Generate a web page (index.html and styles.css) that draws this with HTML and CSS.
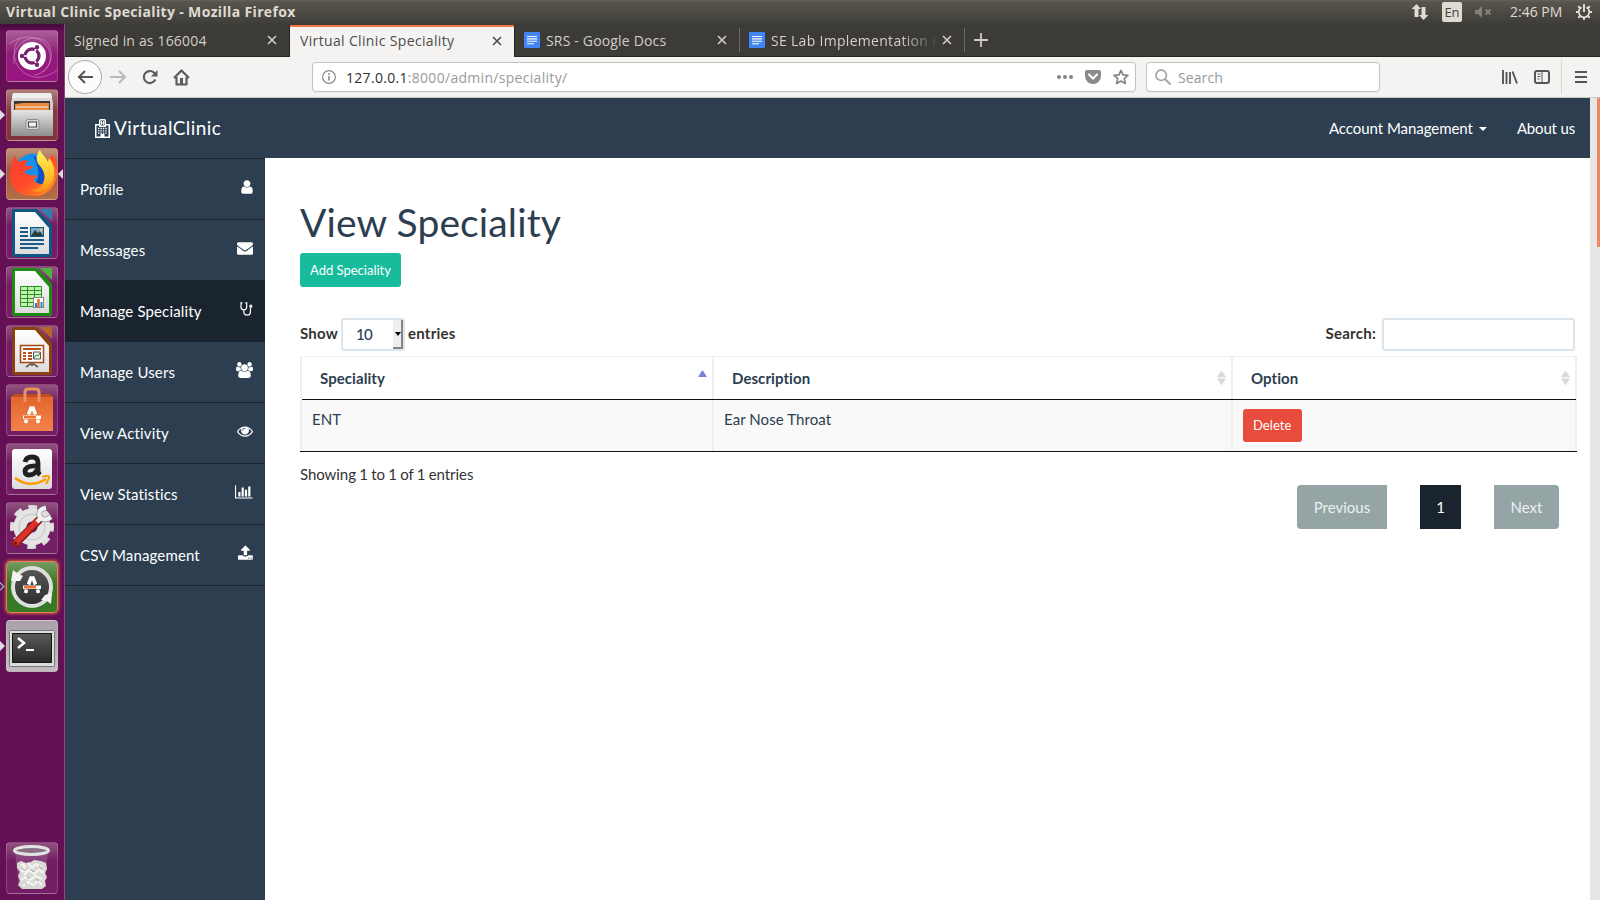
FILE: index.html
```html
<!DOCTYPE html>
<html lang="en">
<head>
<meta charset="utf-8">
<title>Virtual Clinic Speciality</title>
<link rel="stylesheet" href="styles.css">
</head>
<body>
<svg width="0" height="0" class="defs">
  <defs>
    <linearGradient id="silver" x1="0" y1="0" x2="0" y2="1"><stop offset="0" stop-color="#e6e6e6"/><stop offset="1" stop-color="#8f8f8f"/></linearGradient>
    <linearGradient id="paper" x1="0" y1="0" x2="0" y2="1"><stop offset="0" stop-color="#ffffff"/><stop offset="1" stop-color="#dcdcdc"/></linearGradient>
    <linearGradient id="fox" x1="0" y1="0" x2="1" y2="1"><stop offset="0" stop-color="#ff3b30"/><stop offset=".5" stop-color="#ff4a2a"/><stop offset="1" stop-color="#ff9a1e"/></linearGradient>
    <linearGradient id="flame" x1="0" y1="0" x2="0" y2="1"><stop offset="0" stop-color="#fff45a"/><stop offset=".6" stop-color="#ffc229"/><stop offset="1" stop-color="#ff8a1c"/></linearGradient>
    <linearGradient id="bag" x1="0" y1="0" x2="0" y2="1"><stop offset="0" stop-color="#e0632b"/><stop offset="1" stop-color="#f4824a"/></linearGradient>
    <linearGradient id="dark" x1="0" y1="0" x2="0" y2="1"><stop offset="0" stop-color="#5a5a58"/><stop offset="1" stop-color="#2a2a28"/></linearGradient>
    <path id="close" d="M1 1l8 8M9 1l-8 8" fill="none" stroke="currentColor" stroke-width="1.6"/>
    <g id="docs"><rect width="16" height="16" rx="1" fill="#4285f4"/><path d="M3 4.500h10M3 6.900h10M3 9.300h10M3 11.700h7" stroke="#fff" stroke-width="1.100"/></g>
    <g id="store-mark"><path d="M22.500 24.500L25 18h2l2.500 6.500M20.500 29.500L19.500 33M31.500 29.500L32.500 33" fill="none" stroke="#fff" stroke-width="3.600"/><path d="M17 25.500h18v3.500H17z" fill="#fff"/><path d="M18 26h12v2.500H18z" fill="#f07030"/></g>
  </defs>
</svg>

<header class="panel">
  <span class="panel-title">Virtual Clinic Speciality - Mozilla Firefox</span>
  <div class="indicators">
    <svg class="net" width="18" height="18" viewBox="0 0 18 18"><path d="M5.500 1L10 6H7.500v8h-4V6H0.500zM12.500 17L8 12h2.500V4h4v8h3z" fill="#dfdbd2"/></svg>
    <span class="lang">En</span>
    <svg class="vol" width="18" height="12" viewBox="0 0 18 12" fill="#85827a"><path d="M0 4h3l4-4v12L3 8H0z"/><path d="M10.500 3.500l5 5m0-5l-5 5" stroke="#85827a" stroke-width="1.800"/></svg>
    <span class="clock">2:46 PM</span>
    <svg class="power" width="16" height="16" viewBox="0 0 16 16" fill="none" stroke="#dfdbd2"><path d="M5.600 3.300a5.300 5.300 0 1 0 4.800 0" stroke-width="1.800"/><path d="M8 0v8M0 8h3M13 8h3M2.300 2.300l2 2M13.700 2.300l-2 2M2.300 13.700l2-2M13.700 13.700l-2-2M8 13v3" stroke-width="2"/></svg>
  </div>
</header>

<div class="desktop">
  <nav class="launcher">
    <div class="tile ubuntu"><svg viewBox="0 0 52 52"><g fill="none" stroke="#e3b5d8" stroke-opacity=".45"><path d="M8 34C5 16 22 3 38 10c11 8 9 25-2 32M3 14c15-12 38-8 41 10 2 12-6 20-16 21M14 8C4 18 6 42 28 47c9 1 17-2 23-7"/></g><circle cx="26" cy="26" r="14" fill="#fff"/><circle cx="26" cy="26" r="7" fill="none" stroke="#77216f" stroke-width="3.300"/><path d="M26 26L15 26M26 26l5.500-9.500M26 26l5.500 9.500" stroke="#fff" stroke-width="1.500"/><circle cx="26" cy="26" r="5.200" fill="#fff"/><g fill="#77216f"><circle cx="16" cy="26" r="2.200"/><circle cx="31" cy="17.300" r="2.200"/><circle cx="31" cy="34.700" r="2.200"/></g></svg></div>
    <div class="tile files"><i class="pip"></i><svg viewBox="0 0 52 52"><path d="M7 4h38l2 10v33H5V14z" fill="url(#silver)"/><path d="M7 4h38l1 5H6z" fill="#eee"/><path d="M8 12h36v10H8z" fill="#3e3530"/><path d="M9 15l8-1h26v8H9z" fill="#e98a42"/><path d="M10 18h32" stroke="#fff2df"/><path d="M6 21h41v26H6z" fill="url(#silver)"/><rect x="20" y="30.500" width="13" height="10" rx="2" fill="#d6d6d6" stroke="#8c8c8c"/><rect x="22.500" y="33" width="8" height="5" fill="#f2f2f2" stroke="#444"/></svg></div>
    <div class="tile firefox"><i class="pip"></i><i class="pip-right"></i><svg viewBox="0 0 52 52"><circle cx="27" cy="24" r="18.500" fill="#1791e8"/><path d="M27 8c9 2 15 9 13 21-2 9-9 12-16 10 9-4 12-15 3-31z" fill="#0b4fc4"/><path d="M9 8c1 3 2 5 4 6 3-2 6-2 9-1-2 2-3 3-2 5h7c0 2-4 4-8 5 0 3 3 4 6 4 3 1 5-1 6 2-5 2-3 6 4 7 7 0 9-4 10-10 2-5-1-10-4-14l6-5c5 7 5 17 3 25-4 12-14 17-25 16C12 47 4 40 4 28 4 20 6 13 9 8z" fill="url(#fox)"/><path d="M34 2c-5 6-4 12 0 16 5 6 6 12 2 19-3 4-8 6-12 4 6 5 15 4 20-3 7-9 5-22-1-28l-1 4c-2-5-6-7-8-12z" fill="url(#flame)"/></svg></div>
    <div class="tile"><svg viewBox="0 0 52 52"><path d="M34 2h12v12z" fill="#2f7fae"/><path d="M8 2h23l15 16v29q0 3-3 3H9q-3 0-3-3V4q0-2 2-2z" fill="#0e5684"/><path d="M9 5h20l14 16v26H9z" fill="url(#paper)"/><path d="M14 21h8M14 25h8M14 29h8M14 33h24M14 37h24M14 41h18" stroke="#1b5c88" stroke-width="2"/><rect x="24.500" y="20.500" width="13" height="9" fill="#7ba8cf" stroke="#0e5684"/><path d="M25 29l4-6 3 3 2-2 3 5z" fill="#2a3e37"/><circle cx="35" cy="23" r="1.500" fill="#f2c94c"/></svg></div>
    <div class="tile"><svg viewBox="0 0 52 52"><path d="M34 2h12v12z" fill="#4fb43d"/><path d="M8 2h23l15 16v29q0 3-3 3H9q-3 0-3-3V4q0-2 2-2z" fill="#1f8a16"/><path d="M9 5h20l14 16v26H9z" fill="url(#paper)"/><path d="M14.500 20.500h21v20h-21zM14.500 24.500h21M14.500 28.500h21M14.500 32.500h21M14.500 36.500h21M21.500 20.500v20M28.500 20.500v20" fill="#c7f0b7" stroke="#23961a"/><rect x="27.500" y="31.500" width="10" height="10" fill="#fff" stroke="#888"/><path d="M30 41v-4M35.500 41v-5" stroke="#2a7fd0" stroke-width="2"/><path d="M32.500 41v-8" stroke="#e26a1c" stroke-width="2.500"/></svg></div>
    <div class="tile"><svg viewBox="0 0 52 52"><path d="M34 2h12v12z" fill="#b5672a"/><path d="M8 2h23l15 16v29q0 3-3 3H9q-3 0-3-3V4q0-2 2-2z" fill="#8a4210"/><path d="M9 5h20l14 16v26H9z" fill="url(#paper)"/><path d="M26 38v3M26 38l-6 4M26 38l6 4" stroke="#666" stroke-width="2"/><rect x="14.500" y="20.500" width="23" height="17" fill="#fff" stroke="#a34a16" stroke-width="1.500"/><path d="M17 24h18M17 28h3M17 31h3M17 34h3M22 28h4M22 31h4M22 34h4" stroke="#b4541c" stroke-width="2"/><path d="M27.500 27h7v7h-7z" fill="#eee" stroke="#555"/><path d="M28 33l2-3 2 1 2-3" stroke="#2b962b" fill="none"/></svg></div>
    <div class="tile"><svg viewBox="0 0 52 52"><path d="M5 13l4-3h34l4 3v34H5z" fill="url(#bag)"/><path d="M5 13l4-3h34l4 3H5z" fill="#c14d1c"/><path d="M19 18V8q0-3 3-3h8q3 0 3 3v10" fill="none" stroke="#e99067" stroke-width="3"/><g transform="translate(0 6)"><use href="#store-mark"/></g></svg></div>
    <div class="tile"><svg viewBox="0 0 52 52"><rect x="6" y="6" width="40" height="40" rx="3" fill="url(#paper)"/><path d="M19 19q1-5 7-5 6 0 6 6v8q0 2 2 4M32 23q-12-1-13 5 0 4 4 4 7 0 9-8" fill="none" stroke="#222" stroke-width="4.800"/><path d="M9 35q15 11 31 1" fill="none" stroke="#ff9900" stroke-width="2.500"/><path d="M36 34q7-2 7 0t-3 7" fill="none" stroke="#ff9900" stroke-width="2"/></svg></div>
    <div class="tile"><svg viewBox="0 0 52 52"><circle cx="26" cy="25" r="18.500" fill="none" stroke="#dedede" stroke-width="7" stroke-dasharray="8 6.530" transform="rotate(-12 26 25)"/><circle cx="26" cy="25" r="12" fill="none" stroke="#e4e4e4" stroke-width="13"/><circle cx="26" cy="25" r="13" fill="none" stroke="#c4c4c4"/><path d="M10 41l22-22" stroke="#8c1414" stroke-width="8" stroke-linecap="round"/><path d="M10 40.500l22-22" stroke="#d9322c" stroke-width="5.500" stroke-linecap="round"/><path d="M40 6q-8 1-6.500 8 4 6.500 11.500 1" stroke="#8e8e8e" stroke-width="5.500" fill="none"/><path d="M31 20l5-5M40 6q-8 1-6.500 8 4 6.500 11.500 1" stroke="#f2f2f2" stroke-width="4.200" fill="none"/><circle cx="9.500" cy="41" r="1.500" fill="#6e1010"/></svg></div>
    <div class="tile updater"><i class="pip hollow"></i><svg viewBox="0 0 52 52"><circle cx="26" cy="26" r="20" fill="url(#dark)"/><circle cx="26" cy="26" r="19" fill="none" stroke="#dedede" stroke-width="4"/><path d="M5 20l2-11 4 3 6 3-3 5zM46 32l-1 11-4-3-6-1 4-5z" fill="#f3f3f3"/><g transform="translate(0 -1)"><use href="#store-mark"/></g></svg></div>
    <div class="tile terminal"><i class="pip"></i><svg viewBox="0 0 52 52"><rect x="3.500" y="10.500" width="45" height="36" rx="1" fill="#dedede" stroke="#777"/><rect x="6.500" y="13.500" width="39" height="29" fill="url(#dark)" stroke="#161616"/><path d="M12 18l6 5-6 5" fill="none" stroke="#fff" stroke-width="2.500"/><path d="M20 30h8" stroke="#fff" stroke-width="2"/></svg></div>
    <div class="tile trash"><svg viewBox="0 0 52 52"><path d="M9 10h33l-4 35q-12 4-25 0z" fill="#b98fb4" fill-opacity=".3"/><path d="M11 21l4-2 5 2 5-1 3-2 7 1 5 2 1 6-2 4 2 4-2 4 1 5-4 3H16l-4-4 2-4-2-5 2-4-3-4z" fill="#d9d9d5"/><path d="M15 22l4 2-3 5 5 1M22 21l4 5 4-4 5 3M18 33l5-5 5 4 5-4 5 3M15 38l5-3 4 3 6-4 6 3M17 44l5-4 5 3 5-4 4 4" fill="none" stroke="#f4f4f2" stroke-width="2"/><path d="M16 26l3 3M25 28l3 2M33 24l3 3M21 34l2 3M30 37l3 2M19 41l2 2" stroke="#9f9f9b"/><ellipse cx="25.500" cy="8.500" rx="17" ry="4" fill="#877083" stroke="#e3e3e1" stroke-width="3"/></svg></div>
  </nav>

  <main class="window">
    <div class="tabs">
      <div class="tab first"><span class="tab-label t1">Signed in as 166004</span><svg class="x" viewBox="0 0 10 10"><use href="#close"/></svg></div>
      <div class="tab active"><span class="tab-label t2">Virtual Clinic Speciality</span><svg class="x" viewBox="0 0 10 10"><use href="#close"/></svg></div>
      <div class="tab divided wide"><svg class="fav" viewBox="0 0 16 16"><use href="#docs"/></svg><span class="tab-label t3">SRS - Google Docs</span><svg class="x" viewBox="0 0 10 10"><use href="#close"/></svg></div>
      <div class="tab divided last"><svg class="fav" viewBox="0 0 16 16"><use href="#docs"/></svg><span class="tab-label fade">SE Lab Implementation P</span><svg class="x" viewBox="0 0 10 10"><use href="#close"/></svg></div>
      <svg class="plus" width="14" height="14" viewBox="0 0 14 14"><path d="M7 0v14M0 7h14" stroke="#cfccc5" stroke-width="1.800"/></svg>
    </div>

    <div class="toolbar">
      <div class="nav-buttons">
        <span class="back"><svg width="16" height="14" viewBox="0 0 16 14" fill="none" stroke="#545453" stroke-width="2"><path d="M1 7h15M8 1L2 7l6 6"/></svg></span>
        <svg width="17" height="14" viewBox="0 0 17 14" fill="none" stroke="#b9b8b6" stroke-width="2"><path d="M0 7h15M9 1l6 6-6 6"/></svg>
        <svg width="16" height="16" viewBox="0 0 16 16"><path d="M13.300 10.500A6 6 0 1 1 12 3.700l2 2" fill="none" stroke="#5c5c5b" stroke-width="2.200"/><path d="M15.500 1v6.500H9z" fill="#5c5c5b"/></svg>
        <svg width="17" height="17" viewBox="0 0 17 17"><path d="M1 9l7.500-7.500L16 9M3.500 8v7.500h10V8" fill="none" stroke="#5c5c5b" stroke-width="2.200" stroke-linejoin="round"/><path d="M7 9h3v6H7z" fill="#5c5c5b"/></svg>
      </div>
      <div class="url">
        <svg width="14" height="14" viewBox="0 0 14 14"><circle cx="7" cy="7" r="6.400" fill="none" stroke="#8a8a8a" stroke-width="1.200"/><path d="M7 6v4.500M7 3.200v1.800" stroke="#8a8a8a" stroke-width="1.600"/></svg>
        <span class="address"><b>127.0.0.1</b>:8000/admin/speciality/</span>
        <span class="url-actions">
          <svg width="16" height="4" viewBox="0 0 16 4" fill="#858585"><circle cx="2" cy="2" r="2"/><circle cx="8" cy="2" r="2"/><circle cx="14" cy="2" r="2"/></svg>
          <svg width="16" height="14" viewBox="0 0 16 14"><path d="M2 0h12q2 0 2 2v4a8 8 0 0 1-16 0V2q0-2 2-2z" fill="#8a8a8a"/><path d="M4 4.500l4 4 4-4" fill="none" stroke="#fff" stroke-width="2" stroke-linecap="round"/></svg>
          <svg width="16" height="16" viewBox="0 0 16 16"><path d="M8 1.300l2 4.500 4.900.5-3.600 3.300 1 4.900L8 12l-4.300 2.500 1-4.900L1.100 6.300 6 5.800z" fill="none" stroke="#858585" stroke-width="1.700" stroke-linejoin="round"/></svg>
        </span>
      </div>
      <div class="search"><svg width="16" height="16" viewBox="0 0 16 16" fill="none" stroke="#a9a9a9"><circle cx="6.200" cy="6.200" r="5.200" stroke-width="1.800"/><path d="M10 10l5.500 5.500" stroke-width="2.200"/></svg><span>Search</span></div>
      <div class="tools">
        <svg width="16" height="14" viewBox="0 0 16 14" fill="none" stroke="#545453" stroke-width="1.900"><path d="M1 0v14M4.500 2v12M8 2v12M10.500 1.500L15 13.500"/></svg>
        <svg width="16" height="14" viewBox="0 0 16 14"><rect x="1" y="1" width="14" height="12" rx="2" fill="none" stroke="#545453" stroke-width="2"/><path d="M8 1v12M3.500 4h3M3.500 6.500h3M3.500 9h2" stroke="#545453"/></svg>
        <i class="sep"></i>
        <svg width="12" height="12" viewBox="0 0 12 12"><path d="M0 1h12M0 6h12M0 11h12" stroke="#545453" stroke-width="2"/></svg>
      </div>
    </div>

    <div class="viewport">
      <div class="page">
        <div class="navbar">
          <div class="brand"><svg width="15" height="19" viewBox="0 0 15 19"><path d="M0 5h4V1.500Q4 0 5.500 0h4Q11 0 11 1.500V5h4v14H0z" fill="#fff"/><path d="M5.500 1.500h4v5h-4z" fill="#2c3e50"/><path d="M6.500 2v4M8.500 2v4M6.500 4h2" stroke="#fff" stroke-width=".9"/><path d="M1.500 6.500H4V8h7V6.500h2.500v11h-4V15h-4v2.500h-4z" fill="#2c3e50"/><path d="M3 9.500h9.500M3 11.800h9.500M3 14.100h9.500" stroke="#fff" stroke-width="1.300" stroke-dasharray="1.400 1"/></svg><span>VirtualClinic</span></div>
          <div class="nav-links"><span class="account">Account Management<i class="caret"></i></span><span class="about">About us</span></div>
        </div>
        <div class="body">
          <aside class="sidebar">
            <div class="item"><span>Profile</span><svg style="width:12px" viewBox="256 0 1280 1792"><path d="M1536 1399q0 109-62.500 187t-150.500 78h-854q-88 0-150.500-78t-62.500-187q0-85 8.500-160.500t31.500-152 58.500-131 94-89 134.500-34.500q131 128 313 128t313-128q76 0 134.500 34.500t94 89 58.500 131 31.500 152 8.500 160.500zm-256-887q0 159-112.500 271.500t-271.500 112.500-271.500-112.500-112.500-271.500 112.500-271.500 271.500-112.500 271.500 112.500 112.500 271.500z"/></svg></div>
            <div class="item"><span>Messages</span><svg style="width:16px" viewBox="0 0 1792 1792"><path d="M1792 710v794q0 66-47 113t-113 47h-1472q-66 0-113-47t-47-113v-794q44 49 101 87 362 246 497 345 57 42 92.500 65.500t94.500 48 110 24.500h2q51 0 110-24.500t94.500-48 92.500-65.500q170-123 498-345 57-39 100-87zm0-294q0 79-49 151t-122 123q-376 261-468 325-10 7-42.500 31t-54 38.500-52 32.500-57.500 27-50 9h-2q-23 0-50-9t-57.500-27-52-32.500-54-38.500-42.500-31q-91-64-262-182.500t-205-142.500q-62-42-117-115.500t-55-136.500q0-78 41.500-130t118.500-52h1472q65 0 112.500 47t47.500 113z"/></svg></div>
            <div class="item current"><span>Manage Speciality</span><svg style="width:12.600px" viewBox="0 0 1408 1792"><g fill="none" stroke="#fff" stroke-width="135"><path d="M270 210H110v420c0 200 130 350 320 350s320-150 320-350V210H590M430 980v220c0 230 170 380 370 380s370-150 370-380V700"/><circle cx="1216" cy="580" r="110"/></g></svg></div>
            <div class="item"><span>Manage Users</span><svg style="width:17px" viewBox="0 0 1920 1792"><path d="M593 896q-162 5-265 128h-134q-82 0-138-40.500t-56-118.500q0-353 124-353 6 0 43.500 21t97.500 42.500 119 21.500q67 0 133-23-5 37-5 66 0 139 81 256zm1071 637q0 120-73 189.500t-194 69.500h-874q-121 0-194-69.500t-73-189.500q0-53 3.500-103.500t14-109 26.500-108.500 43-97.500 62-81 85.500-53.500 111.500-20q10 0 43 21.500t73 48 107 48 135 21.500 135-21.500 107-48 73-48 43-21.500q61 0 111.500 20t85.500 53.500 62 81 43 97.500 26.500 108.500 14 109 3.500 103.500zm-1024-1277q0 106-75 181t-181 75-181-75-75-181 75-181 181-75 181 75 75 181zm704 384q0 159-112.500 271.500t-271.500 112.500-271.500-112.500-112.500-271.500 112.500-271.500 271.500-112.500 271.500 112.500 112.500 271.500zm576 225q0 78-56 118.500t-138 40.500h-134q-103-123-265-128 81-117 81-256 0-29-5-66 66 23 133 23 59 0 119-21.500t97.500-42.500 43.500-21q124 0 124 353zm-128-609q0 106-75 181t-181 75-181-75-75-181 75-181 181-75 181 75 75 181z"/></svg></div>
            <div class="item"><span>View Activity</span><svg style="width:16px" viewBox="0 0 1792 1792"><path d="M1664 960q-152-236-381-353 61 104 61 225 0 185-131.500 316.500t-316.500 131.500-316.500-131.500-131.500-316.500q0-121 61-225-229 117-381 353 133 205 333.500 326.500t434.500 121.500 434.500-121.500 333.500-326.500zm-720-384q0-20-14-34t-34-14q-125 0-214.500 89.500t-89.500 214.500q0 20 14 34t34 14 34-14 14-34q0-86 61-147t147-61q20 0 34-14t14-34zm848 384q0 34-20 69-140 230-376.500 368.500t-499.500 138.500-499.500-139-376.500-368q-20-35-20-69t20-69q140-229 376.500-368t499.500-139 499.500 139 376.500 368q20 35 20 69z"/></svg></div>
            <div class="item"><span>View Statistics</span><svg style="width:17.600px" viewBox="0 0 2048 1792"><path d="M640 896v512h-256v-512h256zm384-512v1024h-256v-1024h256zm1024 1152v128h-2048v-1536h128v1408h1920zm-640-896v768h-256v-768h256zm384-384v1152h-256v-1152h256z"/></svg></div>
            <div class="item"><span>CSV Management</span><svg style="width:14.800px" viewBox="64 0 1664 1792"><path d="M1344 1472q0-26-19-45t-45-19-45 19-19 45 19 45 45 19 45-19 19-45zm256 0q0-26-19-45t-45-19-45 19-19 45 19 45 45 19 45-19 19-45zm128-224v320q0 40-28 68t-68 28h-1472q-40 0-68-28t-28-68v-320q0-40 28-68t68-28h427q21 56 70.500 92t110.500 36h256q61 0 110.500-36t70.500-92h427q40 0 68 28t28 68zm-325-648q-17 40-59 40h-256v448q0 26-19 45t-45 19h-256q-26 0-45-19t-19-45v-448h-256q-42 0-59-40-17-39 14-69l448-448q18-19 45-19t45 19l448 448q31 30 14 69z"/></svg></div>
          </aside>
          <section class="content">
            <h1>View Speciality</h1>
            <span class="btn add">Add Speciality</span>
            <div class="controls">
              <div class="length"><span>Show</span><span class="select"><span>10</span><i class="drop"></i></span><span>entries</span></div>
              <div class="filter"><span>Search:</span><span class="input"></span></div>
            </div>
            <div class="table">
              <div class="row head">
                <div class="cell"><span>Speciality</span><svg class="sort" viewBox="0 0 9 16"><path d="M0 7L4.500 0 9 7z" fill="#7b80de"/></svg></div>
                <div class="cell"><span>Description</span><svg class="sort" viewBox="0 0 9 16"><path d="M0 7.200L4.500 0.200 9 7.200zM0 8.400L4.500 15.400 9 8.400z" fill="#dadada"/></svg></div>
                <div class="cell"><span>Option</span><svg class="sort" viewBox="0 0 9 16"><path d="M0 7.200L4.500 0.200 9 7.200zM0 8.400L4.500 15.400 9 8.400z" fill="#dadada"/></svg></div>
              </div>
              <div class="row data">
                <div class="cell">ENT</div>
                <div class="cell">Ear Nose Throat</div>
                <div class="cell"><span class="btn delete">Delete</span></div>
              </div>
            </div>
            <div class="foot">
              <span class="info">Showing 1 to 1 of 1 entries</span>
              <div class="pager"><span class="pg prev">Previous</span><span class="pg num">1</span><span class="pg next">Next</span></div>
            </div>
          </section>
        </div>
      </div>
      <div class="scrollbar"><i class="thumb"></i></div>
    </div>
  </main>
</div>
</body>
</html>
```

FILE: styles.css
```css
* { box-sizing: border-box; }
html, body { margin: 0; height: 100%; }
body { display: flex; flex-direction: column; width: 1600px; height: 900px; overflow: hidden; font-family: Lato, "Liberation Sans", sans-serif; font-size: 15px; }
svg { display: block; flex: none; }
.defs { position: absolute; }

.panel { height: 24px; flex: none; display: flex; align-items: center; justify-content: space-between; padding: 0 8px 0 6px; background: linear-gradient(#656255 0, #58554d 2px, #3e3d38 100%); color: #dfdbd2; font-family: "Open Sans", "Noto Sans", sans-serif; font-size: 14px; }
.panel-title { font-weight: 700; white-space: nowrap; letter-spacing: 0.35px; padding-bottom: 2px; }
.indicators { display: flex; align-items: center; }
.lang { width: 20px; height: 20px; margin: 0 13px; background: #dfdbd2; border-radius: 2px; color: #45443f; font-size: 13px; line-height: 20px; text-align: center; }
.clock { width: 53px; margin: 0 13px 0 17px; padding-bottom: 2px; white-space: nowrap; }

.desktop { flex: 1; display: flex; min-height: 0; }
.launcher { width: 65px; flex: none; display: flex; flex-direction: column; gap: 7px; padding: 6px 6px; background: linear-gradient(#430a39 0, #650f55 8px); border-right: 1px solid #914583; }
.tile { position: relative; width: 52px; height: 52px; flex: none; border-radius: 4px; border: 1px solid rgba(255,255,255,.18); background: linear-gradient(#90547f 0, #721d62 35%, #741f65 100%); }
.tile svg { width: 52px; height: 52px; margin: -1px; }
.ubuntu { background: linear-gradient(#aa6097, #901b78 45%, #991481); }
.files { background: linear-gradient(#b0817b, #8a3a42 40%, #84303e); }
.firefox { background: linear-gradient(#c19179, #a65c42 40%, #b36b48); }
.updater { background: linear-gradient(#789a61, #347522 45%, #377a27); border-color: #ef7f54; box-shadow: 0 0 3px 1px #c8603f; }
.terminal { background: linear-gradient(#aaa1a8, #c4bdc2); }
.trash { margin-top: auto; }
.pip, .pip-right { position: absolute; top: 20px; border: 5px solid transparent; }
.pip { left: -7px; border-left-color: #ddd; border-right: 0; }
.pip-right { right: -6px; border-right-color: #ddd; border-left: 0; }
.pip.hollow { left: -11px; top: 21px; width: 7px; height: 7px; border: 1px solid #8ed0e8; border-left: 0; border-bottom: 0; transform: rotate(45deg); }

.window { flex: 1; display: flex; flex-direction: column; min-width: 0; }
.tabs { height: 33px; flex: none; display: flex; align-items: center; background: #3c3b37; border-bottom: 1px solid #262522; font-family: "Open Sans", "Noto Sans", sans-serif; font-size: 14px; color: #d3cfc6; }
.tab { display: flex; align-items: center; width: 225px; height: 24px; padding: 0 13px 0 10px; white-space: nowrap; }
.tab.first { padding-left: 9px; }
.tab.active { height: 32px; width: 224px; margin: 1px 0 -1px; padding: 0 12px 4px 10px; background: #f4f3f2; color: #4c4c4c; border-top: 2px solid #f07746; box-shadow: -1px 0 #262522, 1px 0 #262522; }
.tab.divided { border-right: 1px solid #6b6a66; padding-right: 12px; }
.tab.wide { width: 226px; }
.tab.last { padding-left: 9px; }
.t1, .t3 { letter-spacing: .17px; }
.t2 { letter-spacing: .35px; }
.fav { width: 16px; height: 16px; margin-right: 6px; }
.x { width: 10px; height: 10px; margin-left: auto; }
.active .x { margin-top: 2px; }
.fade { letter-spacing: .3px; -webkit-mask-image: linear-gradient(90deg, #000 130px, transparent 168px); mask-image: linear-gradient(90deg, #000 130px, transparent 168px); }
.plus { margin-left: 9px; }

.toolbar { height: 41px; flex: none; display: flex; align-items: center; background: #f4f3f2; border-bottom: 1px solid #c6c4c0; font-family: "Open Sans", "Noto Sans", sans-serif; font-size: 14px; }
.nav-buttons { width: 247px; display: flex; align-items: center; gap: 15px; padding-left: 3px; }
.back { width: 34px; height: 34px; margin-right: -7px; border: 1px solid #aaa9a7; border-radius: 50%; background: #fcfcfc; display: flex; align-items: center; justify-content: center; }
.url, .search { height: 30px; display: flex; align-items: center; background: #fff; border: 1px solid #c4c2be; border-radius: 4px; box-shadow: 0 1px 1px rgba(0,0,0,.04); }
.url { width: 824px; padding: 0 6px 0 9px; }
.address { margin-left: 10px; color: #9a9a9a; letter-spacing: .3px; }
.address b { font-weight: 400; color: #2f2f2f; }
.url-actions { display: flex; align-items: center; gap: 12px; margin-left: auto; }
.search { width: 234px; margin-left: 10px; padding-left: 8px; gap: 7px; color: #999; letter-spacing: .1px; }
.tools { display: flex; align-items: center; margin-left: auto; padding-right: 13px; gap: 16px; }
.sep { width: 1px; height: 34px; background: #d8d6d3; margin: 0 -3px 0 -5px; }

.viewport { flex: 1; display: flex; min-height: 0; }
.page { flex: 1; display: flex; flex-direction: column; background: #fff; color: #2c3e50; }
.scrollbar { width: 10px; background: #e6e6e6; display: flex; justify-content: flex-end; }
.thumb { width: 3px; height: 149px; background: #f08763; }
.navbar { height: 60px; flex: none; display: flex; align-items: center; justify-content: space-between; padding: 0 15px 0 30px; background: #2c3e50; color: #fff; }
.brand { display: flex; align-items: center; gap: 4px; font-size: 19px; letter-spacing: .45px; }
.brand span { padding-bottom: 2px; }
.nav-links { display: flex; gap: 30px; padding-bottom: 1px; }
.account { display: flex; align-items: center; letter-spacing: -.05px; }
.about { letter-spacing: -.17px; }
.caret { margin: 2px 0 0 6px; border: 4px solid transparent; border-top-color: #fff; border-bottom: 0; }
.body { flex: 1; display: flex; }
.sidebar { width: 200px; background: #2c3e50; border-top: 1px solid #1a242f; color: #fff; letter-spacing: .14px; }
.item { height: 61px; display: flex; align-items: center; justify-content: space-between; padding: 0 12.5px 0 15px; border-bottom: 1px solid #1a242f; }
.item svg { height: 16px; margin-bottom: 5px; fill: #fff; }
.current { background: #1a242f; }

.content { flex: 1; padding: 43px 13px 0 35px; }
h1 { margin: 0; font-size: 39px; font-weight: 400; line-height: 43px; letter-spacing: .12px; }
.btn { display: inline-block; padding: 0 10px; border-radius: 3px; color: #fff; font-size: 13px; line-height: 33px; }
.add { display: block; width: 101px; height: 34px; margin-top: 9px; background: #18bc9c; line-height: 35px; white-space: nowrap; }
.controls { display: flex; justify-content: space-between; margin-top: 31px; padding-right: 2px; color: #333; font-weight: 700; letter-spacing: .25px; }
.length, .filter { display: flex; align-items: center; height: 33px; }
.length > span:first-child { width: 41px; }
.length > span, .filter > span { padding-bottom: 4px; }
.select { display: flex; align-items: center; justify-content: space-between; width: 64px; height: 33px; margin-right: 3px; padding: 0 0 0 13px !important; border: 2px solid #dce4ec; border-radius: 3px; color: #2c3e50; font-weight: 500; letter-spacing: -.8px; }
.select span { padding-bottom: 1px; }
.drop { display: flex; align-items: center; justify-content: center; width: 10px; height: 29px; background: #eee; border-right: 2px solid #858585; border-bottom: 2px solid #858585; }
.drop::before { content: ""; margin-left: 1px; border: 3px solid transparent; border-top: 4px solid #000; border-bottom: 0; }
.filter { gap: 6px; }
.input { width: 193px; height: 33px; border: 2px solid #dce4ec; border-radius: 3px; }
.table { margin-top: 5px; border-top: 1px solid #ecf0f1; }
.row { display: grid; grid-template-columns: 412px 519px 346px; border-bottom: 1px solid #111; }
.cell { border-left: 2px solid #ecf0f1; }
.cell:last-child { border-right: 2px solid #ecf0f1; }
.row.head { border-bottom: 0; padding-bottom: 1px; background: linear-gradient(#111, #111) 2px 100% / 1274px 1px no-repeat; }
.head .cell { height: 42px; display: flex; align-items: center; justify-content: space-between; padding: 0 5px 0 18px; font-weight: 700; letter-spacing: .07px; }
.sort { width: 9px; height: 16px; margin-top: -1px; }
.data { background: #f9f9f9; }
.data .cell { height: 51px; padding: 8px 10px; line-height: 22px; letter-spacing: .07px; }
.delete { height: 33px; width: 59px; margin-top: 1px; background: #e74c3c; }
.foot { display: flex; justify-content: space-between; padding: 11px 18px 0 0; color: #333; }
.info { line-height: 22px; letter-spacing: -.06px; word-spacing: -.45px; }
.pager { display: flex; gap: 33px; padding-top: 22px; }
.pg { height: 44px; line-height: 45px; text-align: center; background: #95a5a6; color: #ecf0f1; }
.prev { width: 90px; border-radius: 4px 0 0 4px; }
.num { width: 41px; background: #1a242f; color: #fff; }
.next { width: 65px; border-radius: 0 4px 4px 0; }
```
